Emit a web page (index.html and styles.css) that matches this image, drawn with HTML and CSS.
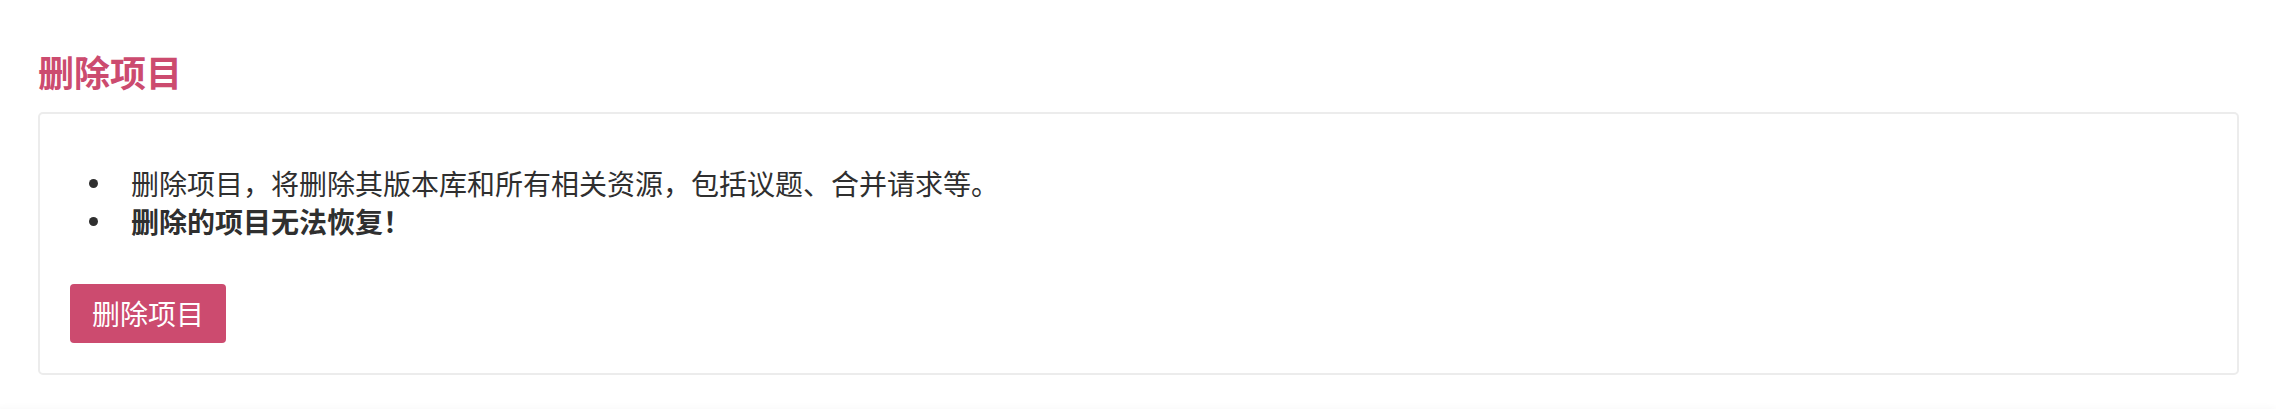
FILE: index.html
```html
<!DOCTYPE html>
<html lang="zh-CN">
<head>
    <meta charset="UTF-8">
    <title>删除项目</title>
    <link rel="stylesheet" href="styles.css">
</head>
<body>
    <div class="page">
        <h3 class="danger-title">删除项目</h3>

        <div class="danger-panel">
            <ul class="notice-list">
                <li>删除项目，将删除其版本库和所有相关资源，包括议题、合并请求等。</li>
                <li class="strong">删除的项目无法恢复！</li>
            </ul>
            <button class="btn-danger">删除项目</button>
        </div>
    </div>
    <div class="next-card"></div>
</body>
</html>
```

FILE: styles.css
```css
:root {
    --danger-color: #cc4b6f;
    --text-color: #2f2f2f;
    --border-color: #ececec;
}

body {
    margin: 0;
    background: #fff;
    font-family: "Noto Sans CJK SC", "Liberation Sans", sans-serif;
    color: var(--text-color);
    overflow: hidden;
}

.page {
    padding: 0 37px 0 38px;
}

/* 标题 */
.danger-title {
    margin: 0;
    padding: 50px 0 20px;
    font-size: 36px;
    line-height: 42px;
    font-weight: 700;
    color: var(--danger-color);
}

/* 面板 */
.danger-panel {
    border: 2px solid var(--border-color);
    border-radius: 5px;
    padding: 50px 30px 30px;
}

.notice-list {
    list-style: none;
    margin: 0 0 44px;
    padding: 0;
    font-size: 28px;
    line-height: 38px;
}

.notice-list li {
    display: flex;
    align-items: center;
}

.notice-list li::before {
    content: "";
    flex: none;
    width: 9px;
    height: 9px;
    border-radius: 50%;
    background: var(--text-color);
    margin: 0 33px 0 19px;
}

.notice-list .strong {
    font-weight: 700;
}

/* 按钮 */
.btn-danger {
    display: block;
    height: 59px;
    padding: 0 22px;
    border: none;
    border-radius: 4px;
    background: var(--danger-color);
    color: #fff;
    font-family: inherit;
    font-size: 28px;
    line-height: 59px;
}

.next-card {
    margin: 34px 0 0 -4px;
    height: 9px;
    box-shadow: 0 0 8px rgba(0, 0, 0, 0.04);
}
```
